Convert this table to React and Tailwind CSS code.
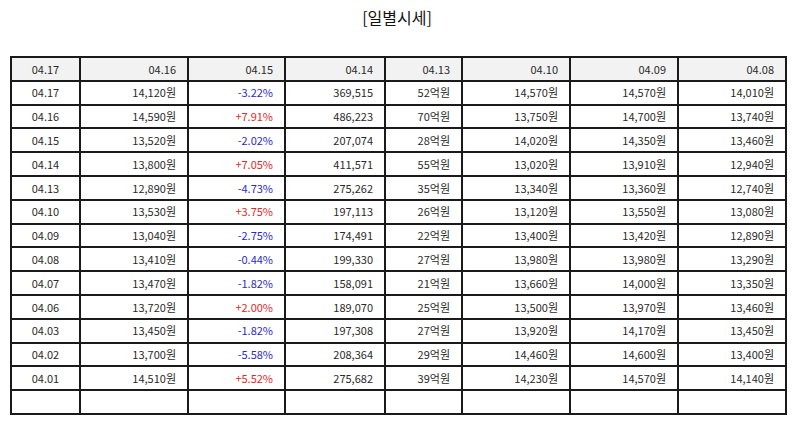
const header = ["04.17", "04.16", "04.15", "04.14", "04.13", "04.10", "04.09", "04.08"];

const rows = [
  ["04.17", "14,120원", "-3.22%", "369,515", "52억원", "14,570원", "14,570원", "14,010원"],
  ["04.16", "14,590원", "+7.91%", "486,223", "70억원", "13,750원", "14,700원", "13,740원"],
  ["04.15", "13,520원", "-2.02%", "207,074", "28억원", "14,020원", "14,350원", "13,460원"],
  ["04.14", "13,800원", "+7.05%", "411,571", "55억원", "13,020원", "13,910원", "12,940원"],
  ["04.13", "12,890원", "-4.73%", "275,262", "35억원", "13,340원", "13,360원", "12,740원"],
  ["04.10", "13,530원", "+3.75%", "197,113", "26억원", "13,120원", "13,550원", "13,080원"],
  ["04.09", "13,040원", "-2.75%", "174,491", "22억원", "13,400원", "13,420원", "12,890원"],
  ["04.08", "13,410원", "-0.44%", "199,330", "27억원", "13,980원", "13,980원", "13,290원"],
  ["04.07", "13,470원", "-1.82%", "158,091", "21억원", "13,660원", "14,000원", "13,350원"],
  ["04.06", "13,720원", "+2.00%", "189,070", "25억원", "13,500원", "13,970원", "13,460원"],
  ["04.03", "13,450원", "-1.82%", "197,308", "27억원", "13,920원", "14,170원", "13,450원"],
  ["04.02", "13,700원", "-5.58%", "208,364", "29억원", "14,460원", "14,600원", "13,400원"],
  ["04.01", "14,510원", "+5.52%", "275,682", "39억원", "14,230원", "14,570원", "14,140원"],
  ["", "", "", "", "", "", "", ""],
];

const widths = ["w-[69px]", "w-[108px]", "w-[97px]", "w-[100px]", "w-[77px]", "w-[108px]", "w-[108px]", "w-[108px]"];

const changeColor = (v) => {
  if (v.startsWith("+")) return "text-[#dd2b2b]";
  if (v.startsWith("-")) return "text-[#2b2bcc]";
  return "";
};

export default function App() {
  return (
    <div className="w-[794px] h-[425px] bg-white font-['Noto_Sans_CJK_KR','Noto_Sans',sans-serif] text-[#2a2a2a]">
      <h1 className="pt-[5px] h-[56px] text-center text-[16px] leading-[24px] text-[#111]">[일별시세]</h1>
      <table className="ml-[10px] w-[775px] table-fixed border-collapse text-[11px]">
        <colgroup>
          {widths.map((w, i) => (
            <col key={i} className={w} />
          ))}
        </colgroup>
        <thead>
          <tr className="h-[23.8px] bg-[#f2f2f2]">
            {header.map((h, i) => (
              <th
                key={i}
                className={`p-0 border-2 border-[#1a1a1a] font-normal ${i === 0 ? "text-center" : "text-right pr-[11px]"}`}
              >
                {h}
              </th>
            ))}
          </tr>
        </thead>
        <tbody>
          {rows.map((r, ri) => (
            <tr key={ri} className="h-[23.8px]">
              {r.map((c, ci) => (
                <td
                  key={ci}
                  className={`p-0 border-2 border-[#1a1a1a] ${ci === 0 ? "text-center" : "text-right pr-[11px]"} ${ci === 2 ? changeColor(c) : ""}`}
                >
                  {c}
                </td>
              ))}
            </tr>
          ))}
        </tbody>
      </table>
    </div>
  );
}
